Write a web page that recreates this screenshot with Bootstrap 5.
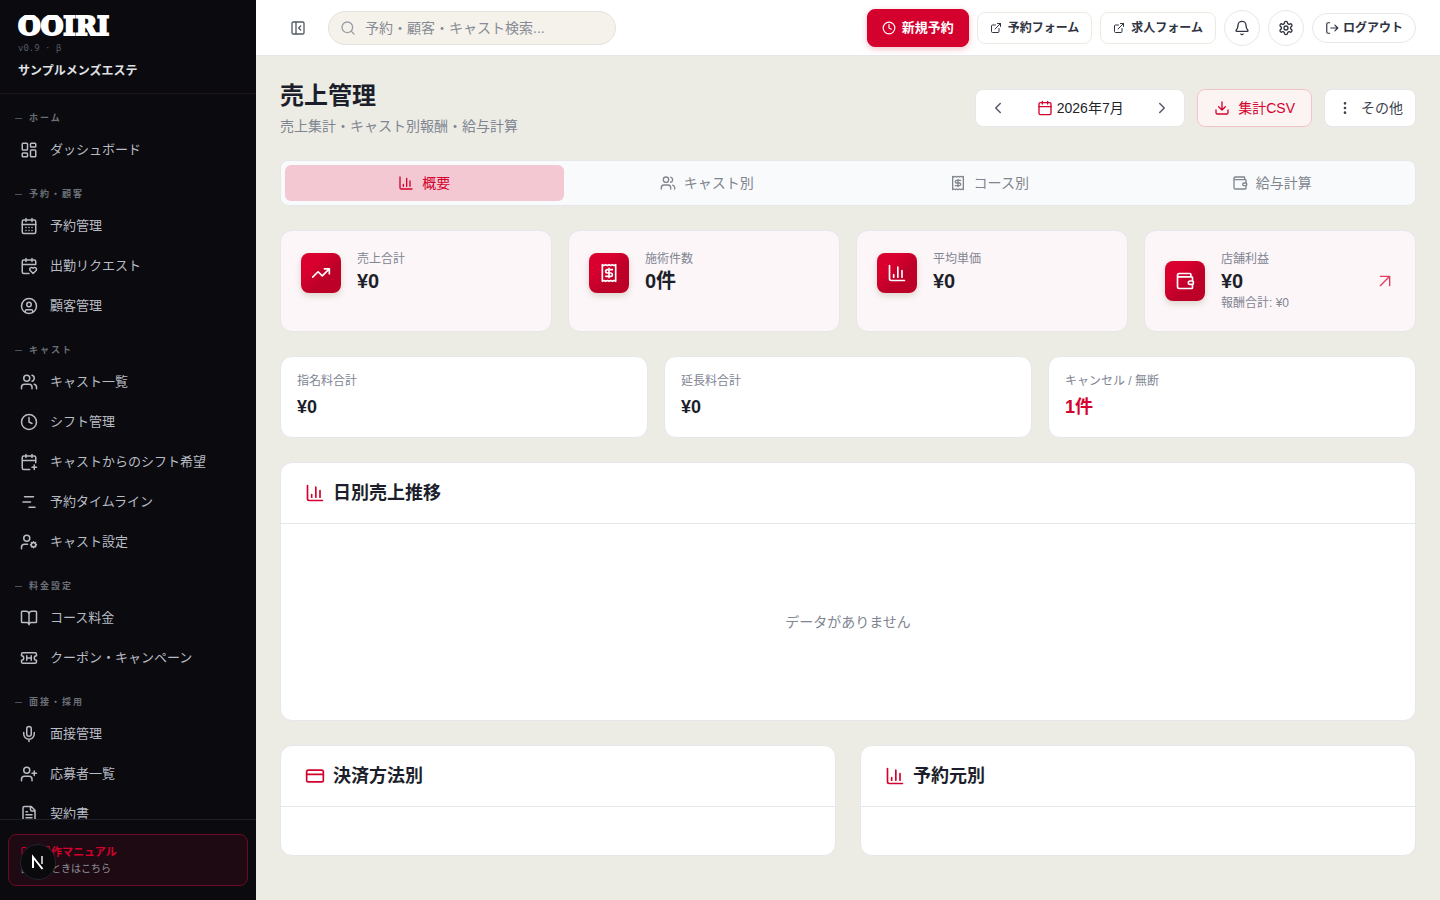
<!DOCTYPE html>
<html lang="ja">
<head>
<meta charset="utf-8">
<meta name="viewport" content="width=device-width, initial-scale=1">
<title>売上管理 | OOIRI</title>
<link rel="stylesheet" href="https://cdn.jsdelivr.net/npm/bootstrap@5.3.0/dist/css/bootstrap.min.css">
<style>
:root{--brand:#d4002d;--ink:#1c1f2b;--muted:#808592;--line:#e5e7eb;--night:#0a0a0f}
body{font-family:"Liberation Sans","Noto Sans CJK JP",sans-serif;font-size:14px;line-height:20px;color:var(--ink);background:#ecece4}
.ico{width:16px;height:16px;flex:none;fill:none;stroke:currentColor;stroke-width:2;stroke-linecap:round;stroke-linejoin:round}
.ico-xs{width:12px;height:12px}.ico-sm{width:14px;height:14px}.ico-md{width:18px;height:18px}.ico-lg{width:20px;height:20px}

/* sidebar */
.side{width:256px;height:100vh;top:0;background:var(--night);flex:none}
.side-head{height:94px;flex:none;padding:12px 18px 0;border-bottom:1px solid #1d1318}
.logo{font:bold 26px/28px "DejaVu Serif",serif;color:#fff;-webkit-text-stroke:2px #fff}
.logo-o{position:relative}
.logo-o::before{content:"";position:absolute;left:5px;top:4px;width:13px;height:5px;border-radius:3px;background:#fff}
.ver{font:9px/12px "DejaVu Sans Mono",monospace;color:#555a65;margin-top:2px}
.shop{font-size:12px;line-height:16px;font-weight:700;color:#e0e2e6;margin-top:9px}
.side-nav{min-height:0;overflow:hidden;padding-top:16px}
.sec{font-size:9px;line-height:16px;letter-spacing:2px;font-weight:700;color:#6b7078;margin:0;padding-left:15px;gap:7px}
.sec::before{content:"";width:7px;height:1px;background:#4d5159}
.side-list{margin:6px 0 18px;gap:4px}
.side-list .nav-link{height:36px;padding:0 8px 0 20px;gap:12px;font-size:13px;color:#b9bcc4}
.side-list .nav-link:hover{color:#fff}
.side-foot{border-top:1px solid #1e2029;padding:14px 8px}
.manual{height:52px;padding:8px 12px;border:1px solid #6b0a21;border-radius:8px;background:#1e0a12;color:#8d919b;text-decoration:none;font-size:10px;line-height:16px}
.manual strong{font-size:11px;line-height:18px;color:var(--brand);gap:7px}
.dev-badge{position:fixed;left:20px;bottom:20px;width:36px;height:36px;padding:0;border:1px solid #1f2430;border-radius:50%;background:#0a0a0c;z-index:20}

/* top bar */
.topbar{height:56px;padding:0 24px;background:#fff;border-bottom:1px solid var(--line);gap:12px}
.tbtn{font-size:12px;line-height:20px;font-weight:600;color:#2f3442;background:#fff;border:1px solid #ebebe3;border-radius:8px;height:32px;padding:0 12px;gap:6px;text-decoration:none;white-space:nowrap}
.tbtn-main{height:38px;font-size:13px;background:var(--brand);border-color:var(--brand);color:#fff;padding:0 14px;box-shadow:0 2px 6px rgba(212,0,45,.25)}
.tbtn-main:hover{background:#b80028;color:#fff}
.round{width:36px;height:36px;padding:0;border-radius:50%;border-color:#e5e7eb}
.pill-out{height:30px;border-radius:15px;gap:4px;border-color:#e5e7eb}
.plain{border:0;background:none;padding:0;color:#555a67;display:flex;align-items:center;justify-content:center}
.toggle{width:36px;height:36px}
.finder{width:288px;height:34px;border:1px solid #e4e4dd;border-radius:17px;background:#f4f2ea;padding:0 11px;gap:9px;color:#9a9ea9}
.finder input{border:0;background:none;outline:0;padding:0;font-size:14px;color:var(--ink);min-width:0;flex:1}
.finder input::placeholder{color:#878b95;opacity:1}

/* page */
.content{min-width:0}
.page{padding:24px;gap:24px}
.title{font-size:24px;line-height:32px;font-weight:700;margin:0 0 4px}
.soft{color:var(--muted)}
.box{background:#fff;border:1px solid var(--line);border-radius:8px;height:38px}
.toolset{gap:12px}
.month{width:210px;padding:0 13px}
.act{padding:0 16px;gap:8px;font-size:14px;color:#3c414e;display:flex;align-items:center}
.act-csv{background:#fcf4f3;border-color:#f3c3cc;color:var(--brand)}
.act-more{padding:0 12px}
.tabs{background:#f9fafb;border:1px solid var(--line);border-radius:8px;padding:4px;gap:4px}
.tabs .nav-link{height:36px;padding:0;gap:8px;color:#80858f;border-radius:6px}
.tabs .nav-link.active{background:#f3c8d2;color:var(--brand)}
.panel{background:#fff;border:1px solid var(--line);border-radius:12px}
.stats{display:grid;grid-template-columns:repeat(4,1fr);gap:16px}
.stats .panel{background:#fdf6f8;padding:20px;min-height:102px}
.trio{display:grid;grid-template-columns:repeat(3,1fr);gap:16px}
.trio .panel{padding:16px}
.duo{display:grid;grid-template-columns:repeat(2,1fr);gap:24px}
.tile{width:40px;height:40px;border-radius:8px;color:#fff;background:linear-gradient(135deg,#d9002f 30%,#bd0028 60%);box-shadow:0 3px 6px rgba(90,80,40,.2)}
.go{margin-right:2px}
.lbl{font-size:12px;line-height:16px;color:var(--muted)}
.val{font-size:20px;line-height:28px;font-weight:700}
.val-s{font-size:18px;line-height:28px;font-weight:700;margin-top:4px}
.red{color:var(--brand)}
.phead{height:61px;padding:0 24px;gap:8px;border-bottom:1px solid var(--line);color:var(--brand)}
.phead h2{font-size:18px;line-height:28px;font-weight:700;margin:0;color:var(--ink)}
.empty{height:196px}
.short{height:48px}
</style>
</head>
<body>
<svg class="d-none" aria-hidden="true">
<symbol id="i-dash" viewBox="0 0 24 24"><rect width="7" height="9" x="3" y="3" rx="1"/><rect width="7" height="5" x="14" y="3" rx="1"/><rect width="7" height="9" x="14" y="12" rx="1"/><rect width="7" height="5" x="3" y="16" rx="1"/></symbol>
<symbol id="i-caldays" viewBox="0 0 24 24"><path d="M8 2v4M16 2v4"/><rect width="18" height="18" x="3" y="4" rx="2"/><path d="M3 10h18M8 14h.01M12 14h.01M16 14h.01M8 18h.01M12 18h.01M16 18h.01"/></symbol>
<symbol id="i-cal" viewBox="0 0 24 24"><path d="M8 2v4M16 2v4"/><rect width="18" height="18" x="3" y="4" rx="2"/><path d="M3 10h18"/></symbol>
<symbol id="i-calheart" viewBox="0 0 24 24"><path d="M3 10h18V6a2 2 0 0 0-2-2H5a2 2 0 0 0-2 2v14a2 2 0 0 0 2 2h7M8 2v4M16 2v4"/><path d="M21.29 14.7a2.43 2.43 0 0 0-2.65-.52c-.3.12-.57.3-.8.53l-.34.34-.35-.34a2.43 2.43 0 0 0-2.65-.53c-.3.12-.56.3-.79.53-.95.94-1 2.53.2 3.74L17.5 22l3.6-3.55c1.2-1.21 1.14-2.8.19-3.74Z"/></symbol>
<symbol id="i-calplus" viewBox="0 0 24 24"><path d="M8 2v4M16 2v4M21 13V6a2 2 0 0 0-2-2H5a2 2 0 0 0-2 2v14a2 2 0 0 0 2 2h8M3 10h18M16 19h6M19 16v6"/></symbol>
<symbol id="i-user" viewBox="0 0 24 24"><circle cx="12" cy="12" r="10"/><circle cx="12" cy="10" r="3"/><path d="M7 20.7V19a2 2 0 0 1 2-2h6a2 2 0 0 1 2 2v1.7"/></symbol>
<symbol id="i-users" viewBox="0 0 24 24"><path d="M16 21v-2a4 4 0 0 0-4-4H6a4 4 0 0 0-4 4v2"/><circle cx="9" cy="7" r="4"/><path d="M22 21v-2a4 4 0 0 0-3-3.87M16 3.13a4 4 0 0 1 0 7.75"/></symbol>
<symbol id="i-clock" viewBox="0 0 24 24"><circle cx="12" cy="12" r="10"/><path d="M12 6v6l4 2"/></symbol>
<symbol id="i-gantt" viewBox="0 0 24 24"><path d="M6 5h12M4 12h10M12 19h8"/></symbol>
<symbol id="i-usercog" viewBox="0 0 24 24"><circle cx="9" cy="7" r="4"/><path d="M10 15H6a4 4 0 0 0-4 4v2"/><circle cx="18" cy="15.5" r="3"/><path d="M18 11.5v1M18 18.5v1M22 15.5h-1M15 15.5h-1M20.8 12.7l-.7.7M15.9 17.6l-.7.7M20.8 18.3l-.7-.7M15.9 13.4l-.7-.7"/></symbol>
<symbol id="i-book" viewBox="0 0 24 24"><path d="M12 7v14M3 18a1 1 0 0 1-1-1V4a1 1 0 0 1 1-1h5a4 4 0 0 1 4 4 4 4 0 0 1 4-4h5a1 1 0 0 1 1 1v13a1 1 0 0 1-1 1h-6a3 3 0 0 0-3 3 3 3 0 0 0-3-3z"/></symbol>
<symbol id="i-ticket" viewBox="0 0 24 24"><path d="M2 9a3 3 0 0 1 0 6v2a2 2 0 0 0 2 2h16a2 2 0 0 0 2-2v-2a3 3 0 0 1 0-6V7a2 2 0 0 0-2-2H4a2 2 0 0 0-2 2ZM9 9v6M15 9v6M9 12h6"/></symbol>
<symbol id="i-mic" viewBox="0 0 24 24"><path d="M12 19v3M19 10v2a7 7 0 0 1-14 0v-2"/><rect x="9" y="2" width="6" height="13" rx="3"/></symbol>
<symbol id="i-userplus" viewBox="0 0 24 24"><path d="M16 21v-2a4 4 0 0 0-4-4H6a4 4 0 0 0-4 4v2M19 8v6M22 11h-6"/><circle cx="9" cy="7" r="4"/></symbol>
<symbol id="i-file" viewBox="0 0 24 24"><path d="M15 2H6a2 2 0 0 0-2 2v16a2 2 0 0 0 2 2h12a2 2 0 0 0 2-2V7ZM14 2v4a2 2 0 0 0 2 2h4M10 9H8M16 13H8M16 17H8"/></symbol>
<symbol id="i-panel" viewBox="0 0 24 24"><rect width="18" height="18" x="3" y="3" rx="2"/><path d="M9 3v18M16 15l-3-3 3-3"/></symbol>
<symbol id="i-search" viewBox="0 0 24 24"><circle cx="11" cy="11" r="8"/><path d="m21 21-4.3-4.3"/></symbol>
<symbol id="i-ext" viewBox="0 0 24 24"><path d="M15 3h6v6M10 14 21 3M18 13v6a2 2 0 0 1-2 2H5a2 2 0 0 1-2-2V8a2 2 0 0 1 2-2h6"/></symbol>
<symbol id="i-bell" viewBox="0 0 24 24"><path d="M10.27 21a2 2 0 0 0 3.46 0M3.26 15.33A1 1 0 0 0 4 17h16a1 1 0 0 0 .74-1.67C19.41 13.96 18 12.5 18 8A6 6 0 0 0 6 8c0 4.5-1.41 5.96-2.74 7.33"/></symbol>
<symbol id="i-gear" viewBox="0 0 24 24"><path d="M12.22 2h-.44a2 2 0 0 0-2 2v.18a2 2 0 0 1-1 1.73l-.43.25a2 2 0 0 1-2 0l-.15-.08a2 2 0 0 0-2.73.73l-.22.38a2 2 0 0 0 .73 2.73l.15.1a2 2 0 0 1 1 1.72v.51a2 2 0 0 1-1 1.74l-.15.09a2 2 0 0 0-.73 2.73l.22.38a2 2 0 0 0 2.73.73l.15-.08a2 2 0 0 1 2 0l.43.25a2 2 0 0 1 1 1.73V20a2 2 0 0 0 2 2h.44a2 2 0 0 0 2-2v-.18a2 2 0 0 1 1-1.73l.43-.25a2 2 0 0 1 2 0l.15.08a2 2 0 0 0 2.73-.73l.22-.39a2 2 0 0 0-.73-2.73l-.15-.08a2 2 0 0 1-1-1.74v-.5a2 2 0 0 1 1-1.74l.15-.09a2 2 0 0 0 .73-2.73l-.22-.38a2 2 0 0 0-2.73-.73l-.15.08a2 2 0 0 1-2 0l-.43-.25a2 2 0 0 1-1-1.73V4a2 2 0 0 0-2-2z"/><circle cx="12" cy="12" r="3"/></symbol>
<symbol id="i-out" viewBox="0 0 24 24"><path d="M8 21H5a2 2 0 0 1-2-2V5a2 2 0 0 1 2-2h3M17 17l5-5-5-5M22 12H10"/></symbol>
<symbol id="i-left" viewBox="0 0 24 24"><path d="m15 18-6-6 6-6"/></symbol>
<symbol id="i-right" viewBox="0 0 24 24"><path d="m9 18 6-6-6-6"/></symbol>
<symbol id="i-down" viewBox="0 0 24 24"><path d="M12 15V3M21 15v4a2 2 0 0 1-2 2H5a2 2 0 0 1-2-2v-4M7 10l5 5 5-5"/></symbol>
<symbol id="i-dots" viewBox="0 0 24 24"><circle cx="12" cy="12" r="1"/><circle cx="12" cy="5" r="1"/><circle cx="12" cy="19" r="1"/></symbol>
<symbol id="i-chart" viewBox="0 0 24 24"><path d="M3 3v16a2 2 0 0 0 2 2h16M18 17V9M13 17V5M8 17v-3"/></symbol>
<symbol id="i-receipt" viewBox="0 0 24 24"><path d="M4 2v20l2-1 2 1 2-1 2 1 2-1 2 1 2-1 2 1V2l-2 1-2-1-2 1-2-1-2 1-2-1-2 1ZM16 8h-6a2 2 0 1 0 0 4h4a2 2 0 1 1 0 4H8M12 17.5v-11"/></symbol>
<symbol id="i-wallet" viewBox="0 0 24 24"><path d="M19 7V4a1 1 0 0 0-1-1H5a2 2 0 0 0 0 4h15a1 1 0 0 1 1 1v4h-3a2 2 0 0 0 0 4h3a1 1 0 0 0 1-1v-2a1 1 0 0 0-1-1M3 5v14a2 2 0 0 0 2 2h15a1 1 0 0 0 1-1v-4"/></symbol>
<symbol id="i-trend" viewBox="0 0 24 24"><path d="m22 7-8.5 8.5-5-5L2 17M16 7h6v6"/></symbol>
<symbol id="i-upright" viewBox="0 0 24 24"><path d="M5 5h14v14M5 19 19 5"/></symbol>
<symbol id="i-card" viewBox="0 0 24 24"><rect width="20" height="14" x="2" y="5" rx="2"/><path d="M2 10h20"/></symbol>
</svg>

<div class="d-flex">
<aside class="side d-flex flex-column position-sticky">
  <div class="side-head">
    <div class="logo"><span class="logo-o">O</span><span class="logo-o">O</span>IRI</div>
    <div class="ver">v0.9 · β</div>
    <div class="shop">サンプルメンズエステ</div>
  </div>
  <nav class="side-nav flex-grow-1" aria-label="メイン">
    <h6 class="sec d-flex align-items-center">ホーム</h6>
    <div class="side-list nav flex-column">
      <a class="nav-link d-flex align-items-center" href="#"><svg class="ico ico-md"><use href="#i-dash"/></svg>ダッシュボード</a>
    </div>
    <h6 class="sec d-flex align-items-center">予約・顧客</h6>
    <div class="side-list nav flex-column">
      <a class="nav-link d-flex align-items-center" href="#"><svg class="ico ico-md"><use href="#i-caldays"/></svg>予約管理</a>
      <a class="nav-link d-flex align-items-center" href="#"><svg class="ico ico-md"><use href="#i-calheart"/></svg>出勤リクエスト</a>
      <a class="nav-link d-flex align-items-center" href="#"><svg class="ico ico-md"><use href="#i-user"/></svg>顧客管理</a>
    </div>
    <h6 class="sec d-flex align-items-center">キャスト</h6>
    <div class="side-list nav flex-column">
      <a class="nav-link d-flex align-items-center" href="#"><svg class="ico ico-md"><use href="#i-users"/></svg>キャスト一覧</a>
      <a class="nav-link d-flex align-items-center" href="#"><svg class="ico ico-md"><use href="#i-clock"/></svg>シフト管理</a>
      <a class="nav-link d-flex align-items-center" href="#"><svg class="ico ico-md"><use href="#i-calplus"/></svg>キャストからのシフト希望</a>
      <a class="nav-link d-flex align-items-center" href="#"><svg class="ico ico-md"><use href="#i-gantt"/></svg>予約タイムライン</a>
      <a class="nav-link d-flex align-items-center" href="#"><svg class="ico ico-md"><use href="#i-usercog"/></svg>キャスト設定</a>
    </div>
    <h6 class="sec d-flex align-items-center">料金設定</h6>
    <div class="side-list nav flex-column">
      <a class="nav-link d-flex align-items-center" href="#"><svg class="ico ico-md"><use href="#i-book"/></svg>コース料金</a>
      <a class="nav-link d-flex align-items-center" href="#"><svg class="ico ico-md"><use href="#i-ticket"/></svg>クーポン・キャンペーン</a>
    </div>
    <h6 class="sec d-flex align-items-center">面接・採用</h6>
    <div class="side-list nav flex-column">
      <a class="nav-link d-flex align-items-center" href="#"><svg class="ico ico-md"><use href="#i-mic"/></svg>面接管理</a>
      <a class="nav-link d-flex align-items-center" href="#"><svg class="ico ico-md"><use href="#i-userplus"/></svg>応募者一覧</a>
      <a class="nav-link d-flex align-items-center" href="#"><svg class="ico ico-md"><use href="#i-file"/></svg>契約書</a>
    </div>
  </nav>
  <div class="side-foot">
    <a class="manual d-block" href="#">
      <strong class="d-flex align-items-center"><svg class="ico ico-xs"><use href="#i-book"/></svg>操作マニュアル</strong>
      <span class="d-block">困ったときはこちら</span>
    </a>
  </div>
</aside>

<div class="content flex-grow-1">
  <header class="topbar d-flex align-items-center">
    <button class="plain toggle" type="button" aria-label="サイドバーを閉じる"><svg class="ico"><use href="#i-panel"/></svg></button>
    <label class="finder d-flex align-items-center"><svg class="ico"><use href="#i-search"/></svg><input type="search" placeholder="予約・顧客・キャスト検索..." aria-label="検索"></label>
    <div class="d-flex align-items-center gap-2 ms-auto">
      <button type="button" class="btn tbtn tbtn-main d-flex align-items-center"><svg class="ico ico-sm"><use href="#i-clock"/></svg>新規予約</button>
      <a href="#" class="tbtn d-flex align-items-center"><svg class="ico ico-xs"><use href="#i-ext"/></svg>予約フォーム</a>
      <a href="#" class="tbtn d-flex align-items-center"><svg class="ico ico-xs"><use href="#i-ext"/></svg>求人フォーム</a>
      <button type="button" class="btn tbtn round d-flex align-items-center justify-content-center" aria-label="通知"><svg class="ico"><use href="#i-bell"/></svg></button>
      <button type="button" class="btn tbtn round d-flex align-items-center justify-content-center" aria-label="設定"><svg class="ico"><use href="#i-gear"/></svg></button>
      <button type="button" class="btn tbtn pill-out d-flex align-items-center"><svg class="ico ico-sm"><use href="#i-out"/></svg>ログアウト</button>
    </div>
  </header>

  <main class="page d-flex flex-column">
    <div class="d-flex align-items-center justify-content-between">
      <div>
        <h1 class="title">売上管理</h1>
        <p class="soft mb-0">売上集計・キャスト別報酬・給与計算</p>
      </div>
      <div class="toolset d-flex">
        <div class="box month d-flex align-items-center justify-content-between">
          <button type="button" class="plain" aria-label="前の月"><svg class="ico ico-md"><use href="#i-left"/></svg></button>
          <button type="button" class="plain gap-1 text-body"><svg class="ico red"><use href="#i-cal"/></svg>2026年7月</button>
          <button type="button" class="plain" aria-label="次の月"><svg class="ico ico-md"><use href="#i-right"/></svg></button>
        </div>
        <button type="button" class="box act act-csv"><svg class="ico"><use href="#i-down"/></svg>集計CSV</button>
        <button type="button" class="box act act-more"><svg class="ico"><use href="#i-dots"/></svg>その他</button>
      </div>
    </div>

    <div class="nav nav-pills nav-fill flex-nowrap tabs" role="tablist">
      <button type="button" role="tab" class="nav-link active d-flex align-items-center justify-content-center w-100"><svg class="ico"><use href="#i-chart"/></svg>概要</button>
      <button type="button" role="tab" class="nav-link d-flex align-items-center justify-content-center w-100"><svg class="ico"><use href="#i-users"/></svg>キャスト別</button>
      <button type="button" role="tab" class="nav-link d-flex align-items-center justify-content-center w-100"><svg class="ico"><use href="#i-receipt"/></svg>コース別</button>
      <button type="button" role="tab" class="nav-link d-flex align-items-center justify-content-center w-100"><svg class="ico"><use href="#i-wallet"/></svg>給与計算</button>
    </div>

    <section class="stats">
      <div class="panel d-flex align-items-start"><div class="d-flex align-items-center gap-3"><span class="tile d-flex align-items-center justify-content-center"><svg class="ico ico-lg"><use href="#i-trend"/></svg></span><div><div class="lbl">売上合計</div><div class="val">¥0</div></div></div></div>
      <div class="panel d-flex align-items-start"><div class="d-flex align-items-center gap-3"><span class="tile d-flex align-items-center justify-content-center"><svg class="ico ico-lg"><use href="#i-receipt"/></svg></span><div><div class="lbl">施術件数</div><div class="val">0件</div></div></div></div>
      <div class="panel d-flex align-items-start"><div class="d-flex align-items-center gap-3"><span class="tile d-flex align-items-center justify-content-center"><svg class="ico ico-lg"><use href="#i-chart"/></svg></span><div><div class="lbl">平均単価</div><div class="val">¥0</div></div></div></div>
      <a href="#" class="panel d-flex align-items-center gap-3 text-decoration-none text-reset"><span class="tile d-flex align-items-center justify-content-center"><svg class="ico ico-lg"><use href="#i-wallet"/></svg></span><span><span class="lbl d-block">店舗利益</span><span class="val d-block">¥0</span><span class="lbl d-block">報酬合計: ¥0</span></span><svg class="ico go red ms-auto opacity-75"><use href="#i-upright"/></svg></a>
    </section>

    <section class="trio">
      <div class="panel"><div class="lbl">指名料合計</div><div class="val-s">¥0</div></div>
      <div class="panel"><div class="lbl">延長料合計</div><div class="val-s">¥0</div></div>
      <div class="panel"><div class="lbl">キャンセル / 無断</div><div class="val-s red">1件</div></div>
    </section>

    <section class="panel">
      <div class="phead d-flex align-items-center"><svg class="ico ico-lg"><use href="#i-chart"/></svg><h2>日別売上推移</h2></div>
      <div class="empty soft d-flex align-items-center justify-content-center">データがありません</div>
    </section>

    <section class="duo">
      <div class="panel"><div class="phead d-flex align-items-center"><svg class="ico ico-lg"><use href="#i-card"/></svg><h2>決済方法別</h2></div><div class="short"></div></div>
      <div class="panel"><div class="phead d-flex align-items-center"><svg class="ico ico-lg"><use href="#i-chart"/></svg><h2>予約元別</h2></div><div class="short"></div></div>
    </section>
  </main>
</div>
</div>

<button type="button" class="dev-badge d-flex align-items-center justify-content-center" aria-label="開発ツール"><svg width="16" height="16" viewBox="0 0 16 16" fill="none" stroke-width="2"><path stroke="#fff" d="M3 14V3L12.500 15"/><path stroke="#fff" stroke-opacity=".7" d="M12 2v8"/></svg></button>
<script src="https://cdn.jsdelivr.net/npm/bootstrap@5.3.0/dist/js/bootstrap.bundle.min.js"></script>
</body>
</html>
